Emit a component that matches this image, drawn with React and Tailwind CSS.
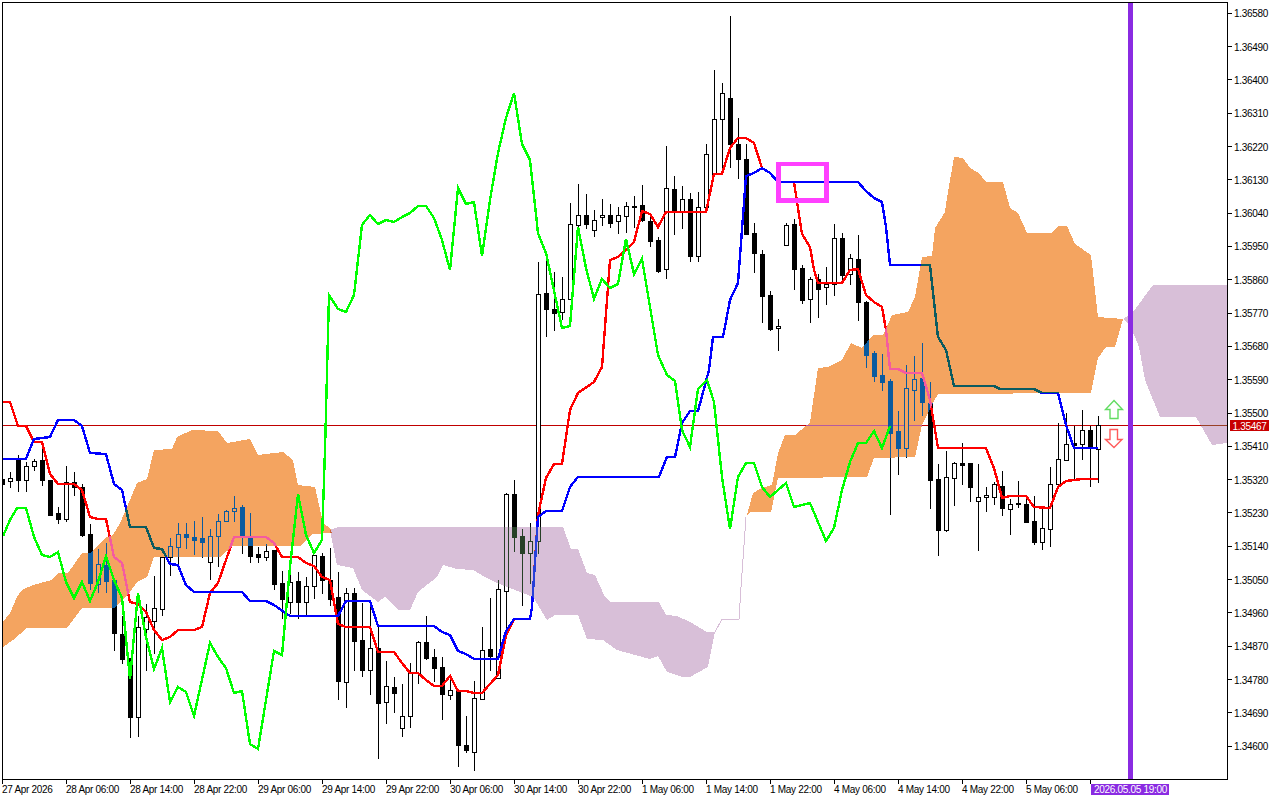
import React from "react";

// [high, bodyTop, bodyBottom, low, bullish(white)=1]
const CANDLES = [
  [475,479,484,488,0],[472,478,481,487,1],[455,459,480,491,0],[462,466,480,491,1],[459,461,466,470,1],[442,460,480,485,0],[480,480,515,515,0],[507,513,519,523,0],
  [466,482,519,521,1],[472,482,487,495,0],[484,487,535,536,0],[524,534,583,589,0],[549,564,584,592,1],[543,565,581,592,0],[580,580,633,650,0],[616,634,659,663,0],
  [658,658,717,737,0],[616,627,717,736,1],[604,617,629,670,1],[576,608,621,653,1],[557,557,609,615,1],[538,546,557,575,1],[523,534,547,565,1],[523,534,537,548,0],
  [521,537,540,554,0],[517,538,542,557,0],[529,536,562,579,1],[514,521,536,566,1],[510,511,521,521,1],[496,508,511,521,1],[505,507,536,553,0],[513,537,556,562,0],
  [547,554,557,562,0],[544,551,557,560,1],[550,550,584,589,0],[571,583,599,618,0],[568,582,602,613,1],[572,581,602,618,0],[577,586,602,615,1],[555,555,586,598,1],
  [553,556,580,593,0],[548,580,599,605,0],[572,597,681,699,0],[588,593,682,707,1],[588,593,641,670,0],[603,640,670,676,0],[600,648,670,694,1],[627,648,703,758,0],
  [661,686,702,723,1],[677,687,693,712,0],[684,716,728,736,1],[663,673,716,727,1],[641,642,673,683,1],[616,642,658,659,0],[649,657,668,681,0],[657,667,694,719,0],
  [677,690,695,699,1],[691,691,745,766,0],[716,745,750,752,0],[681,698,752,770,1],[627,650,699,699,1],[598,649,656,670,0],[580,589,678,678,1],[493,494,591,627,1],
  [480,494,537,551,0],[529,536,553,605,0],[523,541,553,583,1],[262,294,541,553,1],[259,293,309,336,0],[272,309,313,330,0],[277,299,312,319,1],[203,224,299,299,1],
  [184,215,225,234,1],[194,215,224,228,0],[210,220,230,236,1],[199,215,217,225,1],[204,215,223,227,0],[207,215,221,233,1],[202,206,216,232,1],[196,206,207,227,0],
  [185,205,220,221,0],[213,221,241,246,0],[237,240,271,272,0],[146,188,269,278,1],[176,189,211,234,0],[186,199,211,228,1],[193,199,256,261,0],[192,207,256,261,1],
  [144,154,207,212,1],[70,119,174,174,1],[83,93,119,170,1],[16,98,144,167,0],[118,144,159,178,0],[144,159,234,234,0],[223,233,253,272,0],[250,254,296,322,0],
  [291,295,329,330,0],[319,326,328,350,1],[223,225,245,245,1],[219,224,269,289,0],[265,268,300,303,0],[277,279,299,322,1],[274,279,289,317,0],[267,284,287,304,1],
  [224,238,284,295,1],[233,238,275,283,0],[254,258,274,284,1],[235,259,302,320,0],[301,302,355,367,0],[351,353,376,381,0],[354,375,382,390,0],[379,381,433,514,0],
  [411,431,448,474,0],[365,388,448,457,1],[356,379,390,420,1],[343,378,402,415,0],[382,403,480,508,0],[464,479,530,555,0],[451,477,530,531,1],[462,463,478,505,1],
  [443,463,465,484,0],[463,463,487,501,0],[464,497,501,550,1],[487,495,497,511,1],[482,484,497,504,1],[471,486,508,515,0],[499,504,509,534,1],[481,503,504,507,0],
  [499,504,522,522,0],[496,521,542,544,0],[507,528,542,549,1],[467,484,529,546,1],[423,459,484,484,1],[413,444,460,460,1],[426,443,445,480,0],[410,430,444,459,1],
  [426,430,448,486,0],[416,425,449,482,1],
];

const RED = "3,402 10,402 18,426 26,426 34,442 42,442 50,474 58,484 74,484 82,490 90,517 98,519 106,519 114,557 122,563 130,602 138,604 146,612 154,630 162,640 170,637 178,630 194,630 202,627 210,593 218,583 226,560 234,537 266,537 274,543 282,557 298,557 306,563 314,566 322,577 330,580 338,624 346,627 370,627 378,652 394,652 402,663 410,673 418,673 426,680 434,686 442,686 450,676 458,691 466,691 474,693 482,693 490,684 498,675 506,635 514,619 530,619 532,607 538,515 546,478 554,464 562,464 570,410 578,393 594,382 602,367 605,327 610,260 618,257 626,250 634,242 642,211 650,214 658,227 666,212 706,212 714,174 722,174 730,148 738,138 746,138 754,143 762,168 770,173 778,182 794,182 798,208 802,234 810,247 814,270 818,283 842,283 850,270 858,269 866,295 874,302 882,307 886,330 890,369 898,369 906,373 922,373 930,400 938,448 986,448 994,468 1002,498 1010,496 1026,496 1034,507 1050,508 1058,487 1066,481 1082,479 1098,479";

const BLUE = "3,459 26,459 34,439 50,437 58,420 74,420 82,426 90,453 106,454 114,484 122,490 130,527 146,527 154,548 162,549 170,564 178,565 186,585 194,592 242,592 250,601 266,601 274,605 290,616 338,616 346,601 370,601 378,626 434,626 442,632 450,635 458,651 466,654 474,659 498,659 506,631 514,619 530,619 532,607 538,517 546,511 562,511 570,487 578,477 659,477 667,457 675,457 682,423 690,411 698,411 709,370 713,337 723,337 730,300 738,283 746,176 754,173 762,168 770,173 778,182 858,182 866,191 874,198 882,202 886,227 890,265 930,265 938,337 946,350 954,386 994,386 1000,389 1034,389 1042,393 1058,393 1066,425 1074,448 1098,448";

const GREEN = "3,536 10,520 17,508 26,508 34,537 42,555 50,557 58,552 66,582 74,598 82,582 90,601 98,582 106,556 114,580 122,598 130,679 138,593 146,637 154,669 162,648 170,702 178,687 186,692 194,716 210,643 218,657 226,668 234,693 242,691 250,744 258,749 274,651 282,655 290,567 298,494 306,535 314,553 322,540 325,450 329,295 338,309 346,312 354,295 362,225 370,215 378,224 386,220 394,222 402,217 410,213 418,206 426,206 434,218 442,240 450,270 458,188 466,204 474,202 482,256 490,200 498,153 506,118 514,93 522,144 530,160 538,233 546,253 562,328 570,326 578,227 586,268 594,299 602,279 610,288 618,284 626,239 634,274 642,259 658,355 667,375 675,381 682,430 690,447 698,389 707,380 714,402 722,477 730,529 738,477 746,463 754,463 762,487 770,497 786,483 794,507 810,503 826,541 834,528 842,490 850,462 858,443 866,443 874,431 882,448 890,426";

const ORANGE_A = "3,622 10,613 17,597 22,590 33,585 52,580 58,573 68,573 82,553 90,553 107,537 113,535 120,523 127,507 137,483 147,479 154,450 172,449 177,437 192,430 218,431 227,443 250,439 258,455 283,452 293,460 298,485 315,487 323,523 330,528 332,533 313,534 300,546 233,546 220,557 154,557 147,577 137,582 130,592 115,608 82,608 67,628 27,628 13,640 3,647";

const LILAC_A = "330,530 338,527 563,527 571,549 578,549 587,573 595,575 605,597 610,602 659,602 666,615 677,616 690,622 707,632 715,632 712,647 708,667 690,677 682,677 667,672 658,656 650,659 617,650 603,640 587,639 578,615 555,615 547,620 533,597 497,583 485,577 473,570 457,569 443,565 437,577 418,592 410,610 398,610 385,597 378,602 362,590 353,568 337,565";

const ORANGE_B = "747,515 753,493 762,488 772,485 778,453 785,435 795,435 807,425 810,422 818,368 828,367 842,360 851,343 862,348 873,335 883,335 892,315 908,312 915,297 922,257 932,256 935,228 945,212 947,198 954,157 963,158 970,168 979,173 986,182 1003,182 1010,208 1018,213 1027,233 1051,233 1058,226 1067,226 1075,244 1091,255 1098,317 1123,319 1115,347 1106,347 1098,358 1091,393 938,394 933,403 922,425 915,457 874,458 867,477 778,478 771,512 750,512";

const LILAC_B = "1123,319 1133,312 1153,285 1227,285 1227,443 1212,445 1196,417 1160,417 1145,380 1139,347 1130,325";

const THIN = "715,632 722,619 739,619 741,587 746,517";

const PRICES = ["1.36580","1.36490","1.36400","1.36310","1.36220","1.36130","1.36040","1.35950","1.35860","1.35770","1.35680","1.35590","1.35500","1.35410","1.35320","1.35230","1.35140","1.35050","1.34960","1.34870","1.34780","1.34690","1.34600"];

const TIMES = ["27 Apr 2026","28 Apr 06:00","28 Apr 14:00","28 Apr 22:00","29 Apr 06:00","29 Apr 14:00","29 Apr 22:00","30 Apr 06:00","30 Apr 14:00","30 Apr 22:00","1 May 06:00","1 May 14:00","1 May 22:00","4 May 06:00","4 May 14:00","4 May 22:00","5 May 06:00"];

function Candle({ i, d }) {
  const x = 2 + 8 * i;
  const [h, t, b, l, up] = d;
  return (
    <g>
      <rect x={x} y={h} width={1} height={l - h + 1} fill="#000" />
      {up ? (
        <rect x={x - 1.5} y={t + 0.5} width={4} height={Math.max(b - t, 1)} fill="#fff" stroke="#000" strokeWidth={1} />
      ) : (
        <rect x={x - 2} y={t} width={5} height={Math.max(b - t + 1, 2)} fill="#000" />
      )}
    </g>
  );
}

function Line({ points, color, width = 2.4 }) {
  return <polyline points={points} fill="none" stroke={color} strokeWidth={width} strokeLinejoin="miter" />;
}

function Chart() {
  return (
    <svg viewBox="3 3 1224 776" width={1224} height={776} className="block isolate" shapeRendering="crispEdges">
      <rect x={3} y={3} width={1224} height={776} fill="#fff" />
      <rect x={3} y={425} width={1224} height={1} fill="#c00000" />
      {CANDLES.map((d, i) => (
        <Candle key={i} i={i} d={d} />
      ))}
      <Line points={RED} color="#ff0000" />
      <Line points={BLUE} color="#0000ff" />
      <polygon points={ORANGE_A} fill="#0b5b9f" className="mix-blend-difference" />
      <polygon points={ORANGE_B} fill="#0b5b9f" className="mix-blend-difference" />
      <polygon points={LILAC_A} fill="#274027" className="mix-blend-difference" />
      <polygon points={LILAC_B} fill="#274027" className="mix-blend-difference" />
      <Line points={THIN} color="#d8bfd8" width={1} />
      <Line points={GREEN} color="#00ff00" />
      <path
        d="M776 162H829V203H776ZM781 166V198H824V166Z"
        fill="#ff40ff"
        fillRule="evenodd"
      />
      <polygon
        points="1114,400.5 1122.5,409.5 1118,409.5 1118,418.5 1110,418.5 1110,409.5 1105.5,409.5"
        fill="#fff"
        stroke="#62dc62"
        strokeWidth={1.4}
        shapeRendering="geometricPrecision"
      />
      <polygon
        points="1110,429.5 1117.5,429.5 1117.5,439.5 1122,439.5 1114,447.5 1105.5,439.5 1110,439.5"
        fill="#fff"
        stroke="#ff5a5a"
        strokeWidth={1.4}
        shapeRendering="geometricPrecision"
      />
      <rect x={1128} y={3} width={5} height={776} fill="#8a2be2" />
    </svg>
  );
}

export default function App() {
  return (
    <div className="relative w-[1280px] h-[800px] overflow-hidden bg-white text-black text-[10px] tracking-[-0.3px] [font-family:'Liberation_Sans',sans-serif]">
      <div className="flex pl-[2px] pt-[2px]">
        <div className="w-[1226px] h-[778px] shrink-0 border border-black">
          <Chart />
        </div>
        <div className="flex flex-col mt-[-5.36px] h-0">
          {PRICES.map((p) => (
            <div key={p} className="flex items-center h-[33.32px] shrink-0">
              <span className="w-[4px] h-px bg-black" />
              <span className="ml-[2px] mt-[2px] leading-none">{p}</span>
            </div>
          ))}
        </div>
      </div>
      <div className="flex pl-[2px]">
        {TIMES.map((t) => (
          <div key={t} className="w-[64px] shrink-0">
            <div className="w-px h-[4px] bg-black" />
            <div className="mt-[1px] leading-[10px] whitespace-nowrap">{t}</div>
          </div>
        ))}
        <div className="flex shrink-0">
          <div className="w-px h-[4px] bg-black" />
          <div className="mt-[4px] w-[78px] h-[11px] pl-[3px] bg-[#8a2be2] text-white leading-[11px] whitespace-nowrap">2026.05.05 19:00</div>
        </div>
      </div>
      <div className="absolute left-[1230px] top-[420px] w-[39px] h-[11px] pt-px bg-[#c80000] text-white leading-[11px] text-center">1.35467</div>
    </div>
  );
}
